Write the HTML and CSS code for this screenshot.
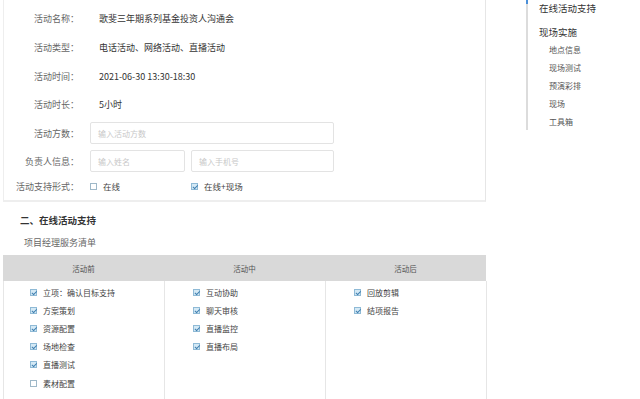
FILE: index.html
```html
<!DOCTYPE html>
<html lang="zh">
<head>
<meta charset="utf-8">
<link rel="stylesheet" href="styles.css">
</head>
<body>
<div class="page">
  <main class="main">
    <section class="card">
      <div class="row r29"><span class="label">活动名称：</span><span class="value">歌斐三年期系列基金投资人沟通会</span></div>
      <div class="row r29"><span class="label">活动类型：</span><span class="value">电话活动、网络活动、直播活动</span></div>
      <div class="row r29"><span class="label">活动时间：</span><span class="value">2021-06-30 13:30-18:30</span></div>
      <div class="row r26"><span class="label">活动时长：</span><span class="value">5小时</span></div>
      <div class="row r22 mt5"><span class="label">活动方数：</span><div class="inputs"><div class="input wide">输入活动方数</div></div></div>
      <div class="row r22 mt6"><span class="label">负责人信息：</span><div class="inputs"><div class="input short">输入姓名</div><div class="input mid">输入手机号</div></div></div>
      <div class="row r20 mt4"><span class="label">活动支持形式：</span><div class="inputs"><label class="opt short"><span class="cb"></span>在线</label><label class="opt"><span class="cb on"></span>在线+现场</label></div></div>
    </section>
    <h2 class="section-title">二、在线活动支持</h2>
    <div class="subtitle">项目经理服务清单</div>
    <div class="table">
      <div class="thead">
        <div class="th">活动前</div>
        <div class="th">活动中</div>
        <div class="th">活动后</div>
      </div>
      <div class="tbody">
        <ul class="col">
          <li><span class="cb on"></span>立项：确认目标支持</li>
          <li><span class="cb on"></span>方案策划</li>
          <li><span class="cb on"></span>资源配置</li>
          <li><span class="cb on"></span>场地检查</li>
          <li><span class="cb on"></span>直播测试</li>
          <li><span class="cb"></span>素材配置</li>
        </ul>
        <ul class="col">
          <li><span class="cb on"></span>互动协助</li>
          <li><span class="cb on"></span>聊天审核</li>
          <li><span class="cb on"></span>直播监控</li>
          <li><span class="cb on"></span>直播布局</li>
        </ul>
        <ul class="col">
          <li><span class="cb on"></span>回放剪辑</li>
          <li><span class="cb on"></span>结项报告</li>
        </ul>
      </div>
    </div>
  </main>
  <aside class="nav">
    <div class="nav-item">在线活动支持</div>
    <div class="nav-item group">现场实施</div>
    <div class="nav-sub">地点信息</div>
    <div class="nav-sub">现场测试</div>
    <div class="nav-sub">预演彩排</div>
    <div class="nav-sub">现场</div>
    <div class="nav-sub">工具箱</div>
  </aside>
</div>
</body>
</html>
```

FILE: styles.css
```css
* { box-sizing: border-box; }
html, body {
  margin: 0;
  padding: 0;
  background: #fff;
  font-family: "Noto Sans CJK SC", "Noto Sans", sans-serif;
  color: #333;
  overflow: hidden;
}
.page {
  display: flex;
  align-items: flex-start;
  width: 640px;
  height: 399px;
}
.main {
  width: 483px;
  margin-left: 3px;
  flex: none;
}
.card {
  border-left: 1px solid #eee;
  border-right: 1px solid #e6e6e6;
  border-bottom: 2px solid #eee;
  padding-top: 4px;
  padding-bottom: 3px;
  display: flex;
  flex-direction: column;
}
.row {
  display: flex;
  align-items: center;
}
.r29 { height: 29px; }
.r26 { height: 26px; }
.r22 { height: 22px; }
.r20 { height: 22px; }
.mt5 { margin-top: 5px; }
.mt6 { margin-top: 6px; }
.mt4 { margin-top: 3px; }
.label {
  width: 75px;
  flex: none;
  text-align: right;
  font-size: 9px;
  color: #666;
  white-space: nowrap;
}
.value {
  margin-left: 20px;
  font-size: 9px;
  color: #333;
  white-space: nowrap;
}
.inputs {
  display: flex;
  gap: 6px;
  margin-left: 11px;
  height: 100%;
  align-items: center;
}
.input {
  height: 22px;
  border: 1px solid #e3e3e3;
  border-radius: 2px;
  font-size: 8px;
  color: #c8c8c8;
  padding-left: 7px;
  display: flex;
  align-items: center;
}
.wide { width: 244px; }
.short { width: 95px; }
.mid { width: 143px; }
.opt {
  display: flex;
  align-items: center;
  font-size: 8.5px;
  color: #444;
}
.opt .cb { margin-right: 6px; }
.cb {
  width: 7px;
  height: 7px;
  border: 1px solid #9fb8c8;
  background: #fff;
  flex: none;
  position: relative;
}
.cb.on {
  background: #d4e9f5;
  border-color: #8fbad6;
}
.cb.on::after {
  content: "";
  position: absolute;
  left: 1.5px;
  top: 0px;
  width: 2px;
  height: 3.5px;
  border-right: 1px solid #3f7fb0;
  border-bottom: 1px solid #3f7fb0;
  transform: rotate(45deg);
}
.section-title {
  margin: 11px 0 0 17px;
  font-size: 9.5px;
  font-weight: bold;
  color: #333;
  line-height: 14px;
}
.subtitle {
  margin: 9px 0 0 21px;
  font-size: 9px;
  color: #666;
  line-height: 14px;
}
.table {
  margin-top: 5px;
}
.thead {
  display: grid;
  grid-template-columns: 161px 161px 161px;
  height: 26px;
  background: #d9d9d9;
}
.th {
  display: flex;
  align-items: center;
  justify-content: center;
  font-size: 7.5px;
  color: #555;
}
.tbody {
  display: grid;
  grid-template-columns: 161px 161px 161px;
  height: 130px;
  border-left: 1px solid #e6e6e6;
}
.col {
  list-style: none;
  margin: 0;
  padding: 2px 0 0 26px;
  border-right: 1px solid #e6e6e6;
}
.col li {
  display: flex;
  align-items: center;
  height: 18.2px;
  font-size: 8px;
  color: #444;
}
.col li .cb { margin-right: 6px; }
.col:nth-child(2), .col:nth-child(3) { padding-left: 28px; }
.nav {
  margin-left: 40px;
  border-left: 2px solid #dcdcdc;
  height: 130px;
  position: relative;
  padding-left: 11px;
  padding-top: 1px;
}
.nav::before {
  content: "";
  position: absolute;
  left: -2px;
  top: 0;
  width: 2px;
  height: 4px;
  background: #4a8fd8;
}
.nav-item {
  font-size: 9.5px;
  color: #333;
  line-height: 14px;
}
.nav-item.group { margin-top: 10px; }
.nav-sub {
  font-size: 8px;
  color: #555;
  line-height: 12px;
  margin-top: 6px;
  padding-left: 10px;
}
.nav-item.group + .nav-sub { margin-top: 5px; }
```
